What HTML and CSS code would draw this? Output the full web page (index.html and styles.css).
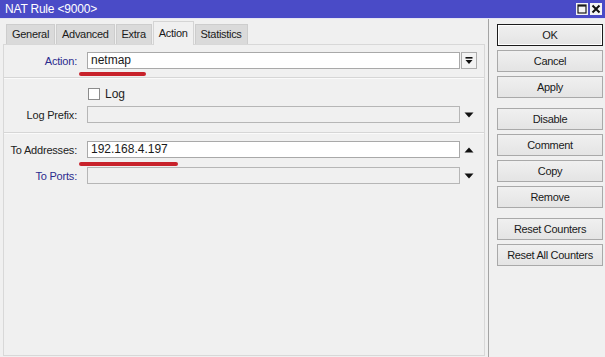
FILE: index.html
```html
<!DOCTYPE html>
<html lang="en">
<head>
  <meta charset="UTF-8">
  <title>NAT Rule &lt;9000&gt;</title>
  <link rel="stylesheet" href="styles.css">
</head>
<body>
  <div class="window">
    <div class="titlebar">
      <span class="title">NAT Rule &lt;9000&gt;</span>
      <div class="title-icons">
        <span class="ticon">
          <svg width="12" height="12" viewBox="0 0 12 12"><rect x="2" y="2" width="8" height="8" fill="none" stroke="#1a1a1a" stroke-width="1.2"/><rect x="2" y="2" width="8" height="1.6" fill="#1a1a1a"/></svg>
        </span>
        <span class="ticon">
          <svg width="12" height="12" viewBox="0 0 12 12"><path d="M2.5 2.5 L9.5 9.5 M9.5 2.5 L2.5 9.5" stroke="#111" stroke-width="2"/></svg>
        </span>
      </div>
    </div>

    <div class="content">
      <div class="main">
        <div class="tabs">
          <div class="tab">General</div>
          <div class="tab">Advanced</div>
          <div class="tab">Extra</div>
          <div class="tab active">Action</div>
          <div class="tab">Statistics</div>
        </div>

        <div class="panel">
          <div class="row">
            <span class="lbl blue">Action:</span>
            <div class="input">netmap</div>
            <span class="dd">
              <svg width="10" height="10" viewBox="0 0 10 10"><rect x="1.5" y="1" width="7" height="1.6" fill="#111"/><polygon points="1.5,4 8.5,4 5,8" fill="#111"/></svg>
            </span>
            <span class="mark mark-action"></span>
          </div>

          <div class="sep"></div>

          <div class="check-row">
            <span class="checkbox"></span>
            <span>Log</span>
          </div>

          <div class="row row-prefix">
            <span class="lbl">Log Prefix:</span>
            <div class="input disabled"></div>
            <span class="arrow">
              <svg width="10" height="6" viewBox="0 0 10 6"><polygon points="0.5,0.5 9.5,0.5 5,5.5" fill="#111"/></svg>
            </span>
          </div>

          <div class="sep sep-second"></div>

          <div class="row row-addr">
            <span class="lbl">To Addresses:</span>
            <div class="input">192.168.4.197</div>
            <span class="arrow">
              <svg width="10" height="6" viewBox="0 0 10 6"><polygon points="0.5,5.5 9.5,5.5 5,0.5" fill="#111"/></svg>
            </span>
            <span class="mark mark-addr"></span>
          </div>

          <div class="row row-ports">
            <span class="lbl blue">To Ports:</span>
            <div class="input disabled"></div>
            <span class="arrow">
              <svg width="10" height="6" viewBox="0 0 10 6"><polygon points="0.5,0.5 9.5,0.5 5,5.5" fill="#111"/></svg>
            </span>
          </div>
        </div>
      </div>

      <div class="side">
        <button class="btn default">OK</button>
        <button class="btn">Cancel</button>
        <button class="btn">Apply</button>
        <button class="btn group">Disable</button>
        <button class="btn">Comment</button>
        <button class="btn">Copy</button>
        <button class="btn">Remove</button>
        <button class="btn group">Reset Counters</button>
        <button class="btn">Reset All Counters</button>
      </div>
    </div>
  </div>
</body>
</html>
```

FILE: styles.css
```css
* { box-sizing: border-box; }
body {
  margin: 0;
  background: #f0f0f0;
  font-family: "Liberation Sans", Arial, sans-serif;
  font-size: 11px;
  color: #1e1e1e;
}
.window {
  width: 605px;
  height: 357px;
  display: flex;
  flex-direction: column;
  overflow: hidden;
}
.titlebar {
  height: 19px;
  background: #4a4bc7;
  color: #fff;
  display: flex;
  align-items: center;
  justify-content: space-between;
  padding: 0 3px 0 5px;
  border-bottom: 1px solid #e4e4f2;
}
.title {
  font-size: 12px;
  letter-spacing: -0.2px;
}
.title-icons {
  display: flex;
  gap: 2px;
}
.ticon {
  width: 12px;
  height: 12px;
  background: #f4f4f4;
  display: flex;
}
.content {
  flex: 1;
  display: flex;
}
.main {
  width: 489px;
  padding: 2px 3px 1px 3px;
  border-right: 1px solid #a4a4a4;
  display: flex;
  flex-direction: column;
}
.tabs {
  display: flex;
  gap: 1px;
  height: 23px;
  padding-left: 3px;
  align-items: flex-end;
}
.tab {
  height: 20px;
  padding: 3px 5px 0 5px;
  background: #dadada;
  border: 1px solid #cdcdcd;
  border-bottom: none;
  letter-spacing: -0.3px;
  color: #1a1a1a;
}
.tab.active {
  height: 24px;
  margin-bottom: -1px;
  padding-top: 5px;
  background: #f0f0f0;
  border-color: #d4d4d4;
  position: relative;
}
.panel {
  flex: 1;
  border: 1px solid #d8d8d8;
  padding-top: 7px;
}
.row {
  display: flex;
  align-items: center;
  height: 17px;
  position: relative;
}
.lbl {
  width: 73px;
  margin-right: 10px;
  text-align: right;
  letter-spacing: -0.2px;
  color: #222;
}
.lbl.blue {
  color: #2b2b8e;
}
.input {
  width: 373px;
  height: 17px;
  border: 1px solid #a9a9a9;
  background: #fff;
  padding-left: 3px;
  font-size: 12px;
  line-height: 15px;
  color: #1a1a1a;
}
.input.disabled {
  background: #f0f0f0;
  border-color: #b6b6b6;
}
.dd {
  width: 16px;
  height: 17px;
  margin-left: 1px;
  border: 1px solid #adadad;
  background: #f3f3f3;
  display: flex;
  align-items: center;
  justify-content: center;
}
.arrow {
  width: 16px;
  margin-left: 1px;
  display: flex;
  justify-content: center;
}
.mark {
  position: absolute;
  top: 20px;
  left: 75px;
  height: 4px;
  border-radius: 2px;
  background: #c8222b;
}
.mark-action { width: 67px; }
.mark-addr { width: 99px; top: 21px; }
.sep {
  margin-top: 8px;
  border-top: 1px solid #d6d6d6;
  border-bottom: 1px solid #fafafa;
}
.sep-second { margin-top: 9px; }
.check-row {
  display: flex;
  align-items: center;
  gap: 5px;
  height: 12px;
  margin-top: 9px;
  padding-left: 84px;
  font-size: 12px;
}
.checkbox {
  width: 12px;
  height: 12px;
  border: 1px solid #8c8c8c;
  background: #fff;
}
.row-prefix { margin-top: 6px; }
.row-addr { margin-top: 7px; }
.row-ports { margin-top: 9px; }
.side {
  flex: 1;
  padding: 5px 0 0 8px;
  display: flex;
  flex-direction: column;
  gap: 4px;
}
.btn {
  width: 106px;
  height: 22px;
  border: 1px solid #a9a9a9;
  background: linear-gradient(#f0f0f0, #e4e4e4);
  font-family: inherit;
  font-size: 11px;
  letter-spacing: -0.3px;
  color: #1a1a1a;
  padding: 0;
}
.btn.default {
  border: 1px solid #1c1c1c;
  box-shadow: inset 0 0 0 1px #fff;
}
.btn.group {
  margin-top: 6px;
}
```
